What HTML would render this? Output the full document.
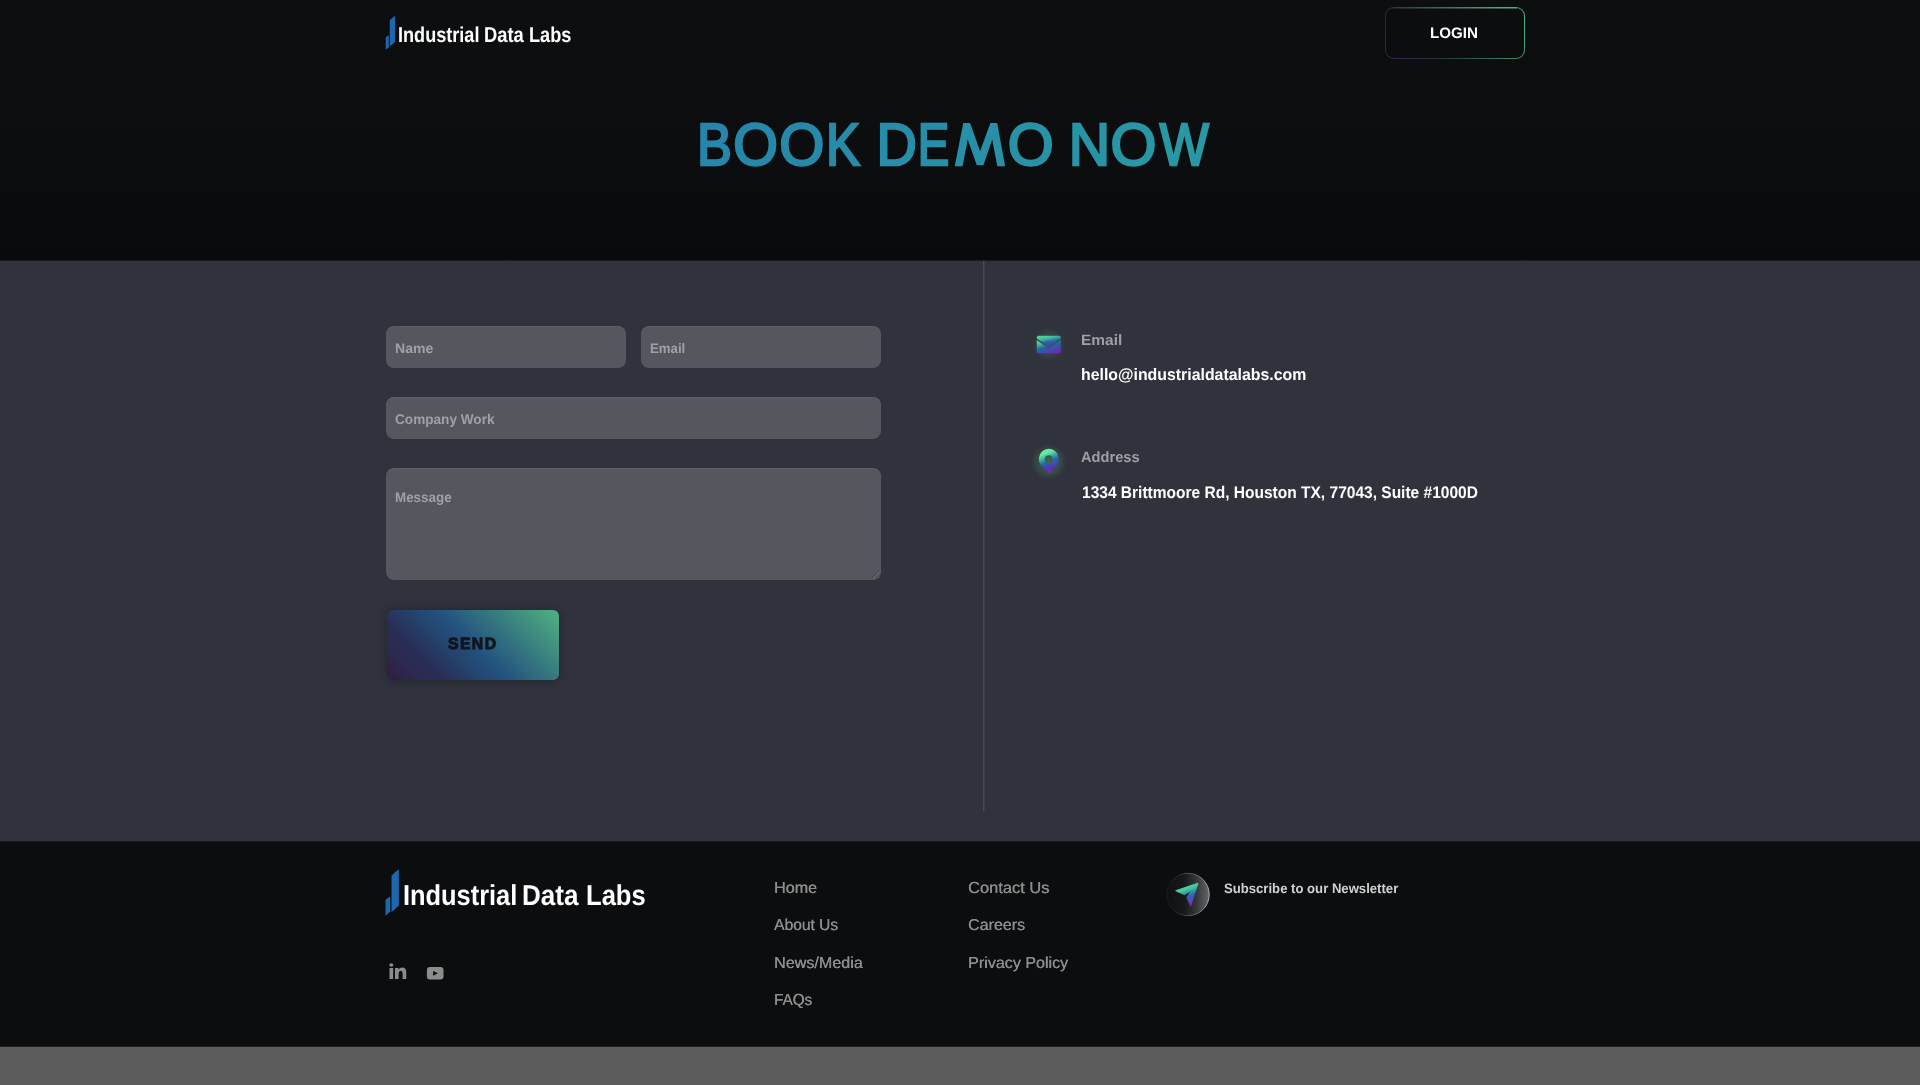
<!DOCTYPE html>
<html lang="en">
<head>
<meta charset="utf-8">
<title>Industrial Data Labs - Book Demo</title>
<style>
*{box-sizing:border-box;margin:0;padding:0}
html,body{width:1920px;height:1085px;overflow:hidden;background:#5c5c5c;font-family:"Liberation Sans",sans-serif}
#page{position:relative;width:1920px;height:1085px;overflow:hidden}
.abs{position:absolute}
.t{position:absolute;white-space:nowrap;line-height:1;transform-origin:0 0;display:block;text-rendering:geometricPrecision}
#hdr{left:0;top:0;width:1920px;height:260px;background:linear-gradient(#0d0e10 0%,#0c0d0f 55%,#090a0c 100%)}
#mid{left:0;top:260px;width:1920px;height:581px;background:#30323c}
#ftr{left:0;top:841px;width:1920px;height:206px;background:#0c0d0f}
#strip{left:0;top:1047px;width:1920px;height:38px;background:#5c5c5c}
#divider{left:983px;top:261px;width:2px;height:550px;background:linear-gradient(90deg,#474952 50%,#3d3f48 50%)}
.inp{position:absolute;background:#55575f;border-radius:8px;box-shadow:inset 0 1px 0 rgba(255,255,255,.05)}
#loginbtn{left:1385px;top:7px;width:140px;height:52px;border-radius:9px;background:linear-gradient(45deg,#3c2154 0%,#262c3a 22%,#2a3f45 35%,#3a7560 60%,#4aa878 85%,#52b680 100%)}
#loginbtn i{position:absolute;left:1px;top:1px;right:1px;bottom:1px;border-radius:8px;background:#0c0d0f;display:block}
#sendbtn{left:386.5px;top:609.7px;width:172.2px;height:70.3px;border-radius:6px;background:linear-gradient(45deg,#321c40 0%,#2c2a50 14%,#292e56 24%,#24406a 36%,#23527f 50%,#50b280 100%);box-shadow:0 0 8px rgba(12,12,20,.35)}
</style>
</head>
<body>
<div id="page">
  <div id="hdr" class="abs"></div>
  <div id="mid" class="abs"></div>
  <div id="ftr" class="abs"></div>
  <div id="strip" class="abs"></div>
  <div class="abs" style="left:0;top:260px;width:1920px;height:1px;background:#191b1f"></div>
  <div class="abs" style="left:0;top:841px;width:1920px;height:1px;background:#17181d"></div>
  <div class="abs" style="left:0;top:1046px;width:1920px;height:1px;background:#252527"></div>
  <div id="divider" class="abs"></div>

  <!-- header logo mark -->
  <svg class="abs" id="logo1" style="left:380px;top:10px" width="20" height="44" viewBox="380 10 20 44">
    <path d="M389.8 20.2 Q392.4 17.4 395 15.8 L395 41.9 Q392.6 44.6 389.8 46.2 Z" fill="#1d67ad"/>
    <path d="M385.7 37.6 Q387.2 36 388.8 35.2 L388.8 47.2 Q387.4 48.8 385.7 49.5 Z" fill="#1d67ad"/>
  </svg>

  <!-- login -->
  <div id="loginbtn" class="abs"><i></i></div>
  <div class="abs" style="left:1393px;top:8px;width:124px;height:1px;background:linear-gradient(90deg,rgba(42,63,69,.45),rgba(60,125,98,.5) 50%,rgba(80,180,126,.5))"></div>

  <svg class="abs" id="heading" style="left:0;top:100px" width="1920" height="100" viewBox="0 100 1920 100">
  <defs><linearGradient id="hg" gradientUnits="userSpaceOnUse" x1="700" y1="0" x2="1210" y2="0"><stop offset="0" stop-color="#2685ab"/><stop offset="1" stop-color="#2899a4"/></linearGradient>
  <mask id="hm" maskUnits="userSpaceOnUse" x="0" y="100" width="1920" height="100"><g fill="#fff" stroke="#fff" stroke-width="2.4" stroke-linejoin="miter" font-family='"Liberation Sans"' font-size="59.4"><text transform="translate(697.07,165.10000000000002) scale(0.8801,1)">B</text><text transform="translate(733.17,165.10000000000002) scale(0.9668,1)">O</text><text transform="translate(779.15,165.10000000000002) scale(0.9760,1)">O</text><text transform="translate(825.95,165.10000000000002) scale(0.8574,1)">K</text><text transform="translate(876.56,165.10000000000002) scale(0.9405,1)">D</text><text transform="translate(917.87,165.10000000000002) scale(0.7941,1)">E</text><path stroke="none" d="M954.7 166.2 L963.3 123.1 L970.1 123.1 L980.1 151.2 L990.4 123.1 L997.2 123.1 L1005.1 166.2 L997.3 166.2 L992.2 139.6 L983.4 165.3 L976.8 165.3 L967.7 139.6 L962.6 166.2 Z"/><text transform="translate(1007.72,165.10000000000002) scale(0.9945,1)">O</text><text transform="translate(1068.69,165.10000000000002) scale(0.9634,1)">N</text><text transform="translate(1110.52,165.10000000000002) scale(0.9945,1)">O</text><text transform="translate(1159.85,165.10000000000002) scale(0.8760,1)">W</text></g></mask></defs>
  <rect x="690" y="100" width="540" height="100" fill="url(#hg)" mask="url(#hm)"/>
</svg>

  <!-- form -->
  <div class="inp" style="left:386px;top:326px;width:240px;height:42px"></div>
  <div class="inp" style="left:641px;top:326px;width:240px;height:42px"></div>
  <div class="inp" style="left:386px;top:397px;width:495px;height:42px"></div>
  <div class="inp" style="left:386px;top:468px;width:495px;height:112px"></div>
  <svg class="abs" style="left:866px;top:566px" width="16" height="16" viewBox="866 566 16 16"><path d="M872.3 577.6 L878.7 571.2 M876.6 577.6 L878.7 575.5" stroke="#3b3d45" stroke-width="1" fill="none"/><path d="M873.3 578 L879.1 572.2 M877.6 578 L879.1 576.5" stroke="#74767d" stroke-width="1" fill="none"/></svg>
  <div id="sendbtn" class="abs"></div>

  <!-- contact icons -->
  <svg class="abs" id="ic_mail" style="left:1020px;top:315px" width="58" height="58" viewBox="1020 315 58 58">
    <defs>
      <radialGradient id="glow1" cx="1048.7" cy="344.5" r="17" gradientUnits="userSpaceOnUse"><stop offset="0" stop-color="#5fe08a" stop-opacity=".28"/><stop offset=".55" stop-color="#5fe08a" stop-opacity=".11"/><stop offset="1" stop-color="#5fe08a" stop-opacity="0"/></radialGradient>
      <linearGradient id="gm1" x1=".2" y1="0" x2=".62" y2="1"><stop offset="0" stop-color="#52d89c"/><stop offset=".25" stop-color="#46bf9f"/><stop offset=".6" stop-color="#2563a3"/><stop offset="1" stop-color="#5a34b2"/></linearGradient>
      <linearGradient id="gm2" x1=".15" y1="0" x2=".7" y2="1"><stop offset="0" stop-color="#52d89c"/><stop offset=".18" stop-color="#48c4a0"/><stop offset=".52" stop-color="#2563a3"/><stop offset=".8" stop-color="#4a44b0"/><stop offset="1" stop-color="#6c28bc"/></linearGradient>
    </defs>
    <circle cx="1048.7" cy="344.5" r="17" fill="url(#glow1)"/>
    <path d="M1038.6 335.7 L1058.8 335.7 Q1060.7 335.7 1060.7 337.6 L1060.7 338.4 L1049.6 346.5 Q1048.7 347.1 1047.8 346.5 L1036.8 338.4 L1036.8 337.6 Q1036.8 335.7 1038.6 335.7 Z" fill="url(#gm1)"/>
    <path d="M1036.8 340.1 L1047.7 348.1 Q1048.7 348.8 1049.7 348.1 L1060.7 340.1 L1060.7 351.4 Q1060.7 353.2 1058.9 353.2 L1038.6 353.2 Q1036.8 353.2 1036.8 351.4 Z" fill="url(#gm2)"/>
  </svg>
  <svg class="abs" id="ic_pin" style="left:1020px;top:432px" width="58" height="58" viewBox="1020 432 58 58">
    <defs>
      <radialGradient id="glow2" cx="1048.8" cy="462" r="18" gradientUnits="userSpaceOnUse"><stop offset="0" stop-color="#5fe08a" stop-opacity=".3"/><stop offset=".6" stop-color="#5fe08a" stop-opacity=".15"/><stop offset="1" stop-color="#5fe08a" stop-opacity="0"/></radialGradient>
      <linearGradient id="gp" gradientUnits="userSpaceOnUse" x1="1042.5" y1="449" x2="1053" y2="474"><stop offset="0" stop-color="#66f5a0"/><stop offset=".2" stop-color="#5eeca0"/><stop offset=".52" stop-color="#2468a6"/><stop offset=".78" stop-color="#5a30b4"/><stop offset="1" stop-color="#8e1cc6"/></linearGradient>
    </defs>
    <circle cx="1048.8" cy="462" r="18" fill="url(#glow2)"/>
    <path fill-rule="evenodd" d="M1040.9 464.9 A10 10 0 1 1 1056.8 464.9 Q1052.3 468.9 1049.8 473 Q1048.85 474.4 1047.9 473 Q1045.4 468.9 1040.9 464.9 Z M1048.7 455.3 A3.9 3.9 0 1 0 1048.7 463.1 A3.9 3.9 0 1 0 1048.7 455.3 Z" fill="url(#gp)"/>
  </svg>

  <!-- footer logo mark -->
  <svg class="abs" id="logo2" style="left:380px;top:862px" width="24" height="60" viewBox="380 862 24 60">
    <path d="M391.5 875.8 Q395.2 871.6 398.9 869.3 L398.9 905.2 Q395.4 909.2 391.5 911.9 Z" fill="#1d67ad"/>
    <path d="M385.5 899.8 Q387.8 897.6 390.3 896.4 L390.3 911.2 Q388 913.8 385.5 915.7 Z" fill="#1d67ad"/>
  </svg>

  <!-- social -->
  <svg class="abs" id="ic_social" style="left:385px;top:960px" width="64" height="24" viewBox="385 960 64 24">
    <g fill="#8b8d8c">
      <ellipse cx="391.3" cy="965.1" rx="2.05" ry="1.75"/>
      <rect x="389.5" y="968" width="3.65" height="11"/>
      <path d="M395 968 L398.5 968 L398.5 969.5 Q399.8 967.6 402.2 967.6 Q406.25 967.6 406.25 972.4 L406.25 979 L402.6 979 L402.6 973.2 Q402.6 970.7 400.7 970.7 Q398.65 970.7 398.65 973.4 L398.65 979 L395 979 Z"/>
      <path d="M429.9 967.1 L440.5 967.1 Q443.5 967.1 443.5 970.1 L443.5 976.6 Q443.5 979.6 440.5 979.6 L429.9 979.6 Q426.9 979.6 426.9 976.6 L426.9 970.1 Q426.9 967.1 429.9 967.1 Z M433.1 970.9 L433.1 975.8 L437.9 973.35 Z" fill-rule="evenodd"/>
    </g>
  </svg>

  <!-- subscribe icon -->
  <svg class="abs" id="ic_sub" style="left:1160px;top:866px" width="56" height="56" viewBox="1160 866 56 56">
    <defs>
      <linearGradient id="gc" gradientUnits="userSpaceOnUse" x1="1167" y1="0" x2="1209" y2="0"><stop offset="0" stop-color="#0f1013"/><stop offset=".4" stop-color="#17181a"/><stop offset=".7" stop-color="#353638"/><stop offset="1" stop-color="#656668"/></linearGradient>
      <linearGradient id="gcb" gradientUnits="userSpaceOnUse" x1="1167" y1="0" x2="1209" y2="0"><stop offset="0" stop-color="#18191c"/><stop offset=".3" stop-color="#2c2d30"/><stop offset=".7" stop-color="#6c6c6d"/><stop offset="1" stop-color="#b2b2b2"/></linearGradient>
      <linearGradient id="ga" gradientUnits="userSpaceOnUse" x1="1184" y1="884" x2="1192" y2="906"><stop offset="0" stop-color="#4fe6a2"/><stop offset=".25" stop-color="#44c8a0"/><stop offset=".55" stop-color="#2a68b0"/><stop offset="1" stop-color="#8e1ecc"/></linearGradient>
    </defs>
    <circle cx="1188" cy="894.5" r="21.2" fill="url(#gc)" stroke="url(#gcb)" stroke-width="1"/>
    <path d="M1175.7 890.7 L1198 883.2 L1190.7 905.9 L1187 897.4 L1191.6 890.4 L1184.3 894.7 Z" fill="url(#ga)" stroke="url(#ga)" stroke-width="1" stroke-linejoin="round"/>
  </svg>

  <span class="t" id="t_lg1a" style="left:397.67px;top:25.00px;font-size:21.51px;font-weight:bold;color:#fff;transform:scaleX(0.8419);">Industrial</span>
  <span class="t" id="t_lg1b" style="left:484.05px;top:25.00px;font-size:21.51px;font-weight:bold;color:#fff;transform:scaleX(0.8543);">Data</span>
  <span class="t" id="t_lg1c" style="left:529.47px;top:25.00px;font-size:21.51px;font-weight:bold;color:#fff;transform:scaleX(0.8440);">Labs</span>
  <span class="t" id="t_login" style="left:1430.45px;top:26.00px;font-size:15.12px;font-weight:bold;color:#fff;transform:scaleX(1.0036);">LOGIN</span>
  <span class="t" id="t_name" style="left:394.92px;top:342.00px;font-size:13.81px;font-weight:bold;color:#a0a1a7;transform:scaleX(1.0218);">Name</span>
  <span class="t" id="t_email" style="left:650.07px;top:342.00px;font-size:13.81px;font-weight:bold;color:#a0a1a7;transform:scaleX(0.9583);">Email</span>
  <span class="t" id="t_company" style="left:395.27px;top:412.00px;font-size:14.1px;font-weight:bold;color:#a0a1a7;transform:scaleX(0.9649);">Company Work</span>
  <span class="t" id="t_message" style="left:394.96px;top:491.00px;font-size:13.95px;font-weight:bold;color:#a0a1a7;transform:scaleX(0.9616);">Message</span>
  <span class="t" id="t_send" style="left:448.44px;top:636.00px;font-size:16.28px;font-weight:bold;color:#14151b;letter-spacing:1.5px;transform:scaleX(0.9657);-webkit-text-stroke:1.0px #14151b;">SEND</span>
  <span class="t" id="t_cemail" style="left:1081.33px;top:333.00px;font-size:15.04px;font-weight:bold;color:#9fa0a5;transform:scaleX(1.0288);">Email</span>
  <span class="t" id="t_cemailv" style="left:1081.01px;top:367.00px;font-size:16.5px;font-weight:bold;color:#fff;transform:scaleX(0.9618);">hello@industrialdatalabs.com</span>
  <span class="t" id="t_caddr" style="left:1081.07px;top:451.00px;font-size:14.97px;font-weight:bold;color:#9fa0a5;transform:scaleX(0.9786);">Address</span>
  <span class="t" id="t_caddrv" style="left:1081.73px;top:485.00px;font-size:16.86px;font-weight:bold;color:#fff;transform:scaleX(0.9206);">1334 Brittmoore Rd, Houston TX, 77043, Suite #1000D</span>
  <span class="t" id="t_lg2a" style="left:402.81px;top:882.00px;font-size:28.78px;font-weight:bold;color:#fff;transform:scaleX(0.8824);">Industrial</span>
  <span class="t" id="t_lg2b" style="left:521.83px;top:882.00px;font-size:28.78px;font-weight:bold;color:#fff;transform:scaleX(0.9050);">Data</span>
  <span class="t" id="t_lg2c" style="left:586.00px;top:882.00px;font-size:28.78px;font-weight:bold;color:#fff;transform:scaleX(0.8893);">Labs</span>
  <span class="t" id="t_home" style="left:773.84px;top:881.00px;font-size:15.99px;font-weight:normal;color:#8d8d8d;transform:scaleX(1.0060);text-shadow:.35px 0 0 #8d8d8d">Home</span>
  <span class="t" id="t_about" style="left:774.40px;top:918.00px;font-size:15.84px;font-weight:normal;color:#8d8d8d;transform:scaleX(0.9836);text-shadow:.35px 0 0 #8d8d8d">About Us</span>
  <span class="t" id="t_news" style="left:773.84px;top:956.00px;font-size:15.84px;font-weight:normal;color:#8d8d8d;transform:scaleX(1.0173);text-shadow:.35px 0 0 #8d8d8d">News/Media</span>
  <span class="t" id="t_faq" style="left:773.91px;top:993.00px;font-size:15.99px;font-weight:normal;color:#8d8d8d;transform:scaleX(0.9520);text-shadow:.35px 0 0 #8d8d8d">FAQs</span>
  <span class="t" id="t_contact" style="left:968.23px;top:881.00px;font-size:15.99px;font-weight:normal;color:#8d8d8d;transform:scaleX(1.0277);text-shadow:.35px 0 0 #8d8d8d">Contact Us</span>
  <span class="t" id="t_careers" style="left:968.25px;top:918.00px;font-size:15.84px;font-weight:normal;color:#8d8d8d;transform:scaleX(1.0109);text-shadow:.35px 0 0 #8d8d8d">Careers</span>
  <span class="t" id="t_privacy" style="left:967.74px;top:956.00px;font-size:15.84px;font-weight:normal;color:#8d8d8d;transform:scaleX(1.0149);text-shadow:.35px 0 0 #8d8d8d">Privacy Policy</span>
  <span class="t" id="t_sub" style="left:1224.29px;top:882.00px;font-size:13.66px;font-weight:bold;color:#d2d2d2;transform:scaleX(0.9607);">Subscribe to our Newsletter</span>
</div>
</body>
</html>
